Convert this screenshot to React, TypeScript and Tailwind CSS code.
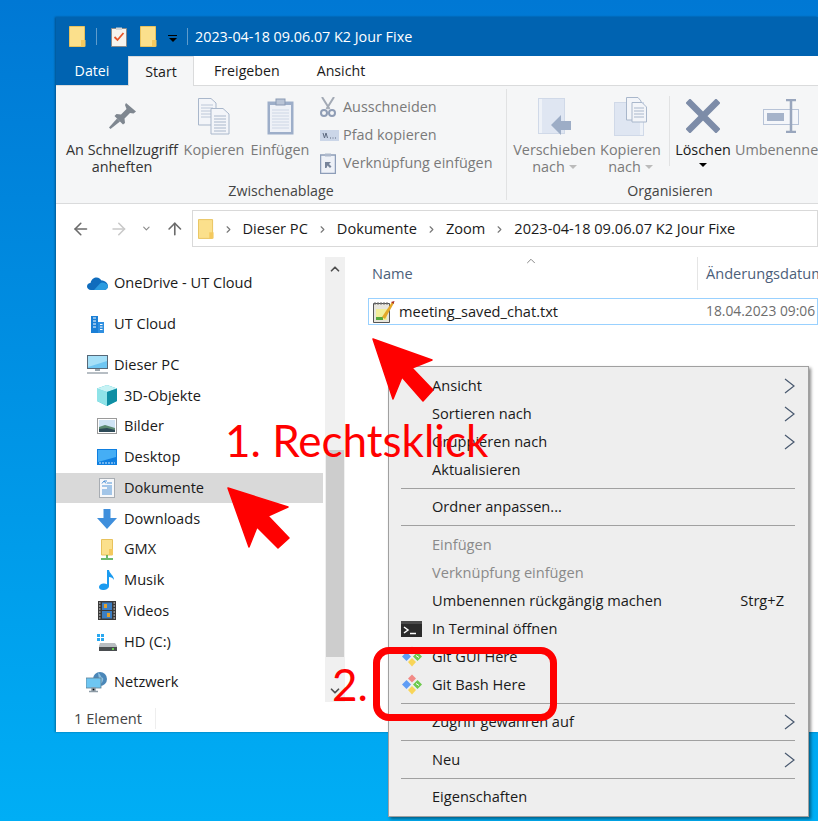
import React from 'react';
import { ChevronRight, ChevronUp, ChevronDown, ArrowLeft, ArrowRight, ArrowUp } from 'lucide-react';

const Folder: React.FC<{ w?: number; h?: number }> = ({ w = 17, h = 21 }) => (
  <svg width={w} height={h} viewBox="0 0 17 21">
    <path d="M0.5 0.5H15.5V20.5H0.5Z" fill="#fbe08c" stroke="#e8c25c" />
    <path d="M12 14H16.5V20.5H12Z" fill="#f4c95e" />
  </svg>
);

const DocCheck = () => (
  <svg width="16" height="20" viewBox="0 0 16 20">
    <path d="M0.5 1.5H15.5V19.5H0.5Z" fill="#f7f4ee" stroke="#8a8a8a" />
    <path d="M5 0.5H11V3H5Z" fill="#d8d8d8" />
    <path d="M3.5 10L6.5 13L12.5 6" fill="none" stroke="#e8562a" strokeWidth="1.8" />
  </svg>
);

const PinIcon = () => (
  <svg width="27" height="26" viewBox="0 0 27 26">
    <path d="M17 0L27 8.500L24.500 10.500L21 10L15.500 15.500L16 20L14 21.500L5.500 13L7.500 11L12 11.500L17.500 6L16 2Z" fill="#7f8790" />
    <path d="M8 15.500L0 24.500L1.500 26L11 18.500Z" fill="#7f8790" />
  </svg>
);

const CopyIcon = () => (
  <svg width="32" height="37" viewBox="0 0 32 37">
    <path d="M0.5 0.5H13L18 5V27H0.5Z" fill="#f3f5f9" stroke="#a9b7cb" />
    <path d="M3 7H15M3 10H15M3 13H15M3 16H15M3 19H15" stroke="#bcc7d8" />
    <path d="M13 10.5H25L31 16V36H13Z" fill="#f3f5f9" stroke="#a9b7cb" />
    <path d="M16 18H28M16 21H28M16 24H28M16 27H28M16 30H28M16 33H28" stroke="#a9b7cb" />
  </svg>
);

const PasteIcon = () => (
  <svg width="27" height="37" viewBox="0 0 27 37">
    <rect x="0.5" y="3.5" width="26" height="33" fill="#9daec9" />
    <rect x="3" y="7" width="21" height="27" fill="#eef1f7" />
    <path d="M5 12H22M5 15H22M5 18H22M5 21H22M5 24H22M5 27H22M5 30H22" stroke="#cdd6e5" />
    <rect x="9" y="1" width="9" height="6" fill="#b9c4d6" stroke="#8a99b3" />
  </svg>
);

const ScissorsIcon = () => (
  <svg width="16" height="20" viewBox="0 0 16 20">
    <path d="M2 0L9.5 12M14 0L6.5 12" stroke="#a3aab5" strokeWidth="2" fill="none" />
    <circle cx="4" cy="16" r="3" fill="none" stroke="#8f9db5" strokeWidth="2" />
    <circle cx="12" cy="16" r="3" fill="none" stroke="#8f9db5" strokeWidth="2" />
  </svg>
);

const PathIcon = () => (
  <svg width="19" height="11" viewBox="0 0 19 11">
    <rect width="19" height="11" fill="#cbd6e8" />
    <path d="M3 3L4.5 8L6 3L7.5 8M10 8H11M12.5 8H13.5M15 8H16" stroke="#5d6a80" fill="none" />
  </svg>
);

const ShortcutIcon = () => (
  <svg width="16" height="21" viewBox="0 0 16 21">
    <rect x="0.5" y="2" width="15" height="18.5" fill="#eef1f7" stroke="#8d9db8" strokeWidth="1.5" />
    <rect x="5" y="0.5" width="6" height="3" fill="#aeb9cc" />
    <path d="M5 15V9H11L9 11L11.5 13.5L10 15L7.5 12.5L6.5 15Z" fill="#77849a" />
  </svg>
);

const MoveIcon = () => (
  <svg width="34" height="37" viewBox="0 0 34 37">
    <rect x="0.5" y="0.5" width="26" height="35" fill="#dfe6f2" stroke="#d0d9e8" />
    <path d="M1 1H4V35H1Z" fill="#eef2f8" />
    <path d="M13 27L23 17V23H33V32H23V37Z" fill="#9dadc6" />
  </svg>
);

const CopyToIcon = () => (
  <svg width="33" height="39" viewBox="0 0 33 39">
    <rect x="0.5" y="5.5" width="29" height="33" fill="#dfe6f2" stroke="#d0d9e8" />
    <path d="M26 6H29V38H26Z" fill="#eef2f8" />
    <path d="M12.5 0.5H24L27 4V23H12.5Z" fill="#f3f5f9" stroke="#a9b7cb" />
    <path d="M18 5.5H28L32.5 10V25H18Z" fill="#f3f5f9" stroke="#a9b7cb" />
    <path d="M20 11H30M20 14H30M20 17H30M20 20H30" stroke="#a9b7cb" />
  </svg>
);

const DeleteIcon = () => (
  <svg width="34" height="34" viewBox="0 0 34 34">
    <path d="M4 4L30 30M30 4L4 30" stroke="#7d8ca8" strokeWidth="6.5" strokeLinecap="square" />
  </svg>
);

const RenameIcon = () => (
  <svg width="37" height="34" viewBox="0 0 37 34">
    <rect x="0.5" y="10.5" width="35" height="15" fill="#f4f6fa" stroke="#b7c3d7" />
    <rect x="4" y="14" width="17" height="8" fill="#a5b3ca" />
    <path d="M23 1H33M28 1V33M23 33H33" stroke="#99a6bd" strokeWidth="2.5" fill="none" />
  </svg>
);

const CloudIcon = () => (
  <svg width="21" height="14" viewBox="0 0 21 14">
    <path d="M4 14C1.5 14 0 12 0 10.500C0 8.500 1.500 7 3.500 7C4.500 3 7 1.500 9.500 1.500C12 1.500 13.500 3 14.500 4.500C18 4.500 21 7 21 10C21 12.500 19 14 17 14Z" fill="#0f6cbd" />
    <path d="M7 14L13 7.500C15 5.500 20 7 21 10C21 12.500 19 14 17 14Z" fill="#2a9be0" />
  </svg>
);

const BuildingIcon = () => (
  <svg width="13" height="17" viewBox="0 0 13 17">
    <path d="M0 0H7V17H0Z" fill="#1a7fd6" />
    <path d="M7 6H13V17H7Z" fill="#2f8fe0" />
    <path d="M2 2H5M2 5H5M2 8H5M2 11H5M9 8.500H11.500M9 11H11.500M9 13.500H11.500" stroke="#fff" />
  </svg>
);

const PcIcon = () => (
  <svg width="21" height="20" viewBox="0 0 21 20">
    <rect x="0.500" y="0.500" width="20" height="13" fill="#6ec6f2" stroke="#566878" />
    <path d="M1 1H20V6L1 12Z" fill="#a5e0f8" />
    <path d="M8 14H13V16H8Z" fill="#9ba6ad" />
    <path d="M0 17H21V19H0Z" fill="#b7bec4" />
  </svg>
);

const CubeIcon = () => (
  <svg width="20" height="21" viewBox="0 0 20 21">
    <path d="M10 0L20 3.500V16L10 21L0 16V3.500Z" fill="#35c0cf" />
    <path d="M0 3.500L10 7L10 21L0 16Z" fill="#8fe3e8" />
    <path d="M10 0L20 3.500L10 7L0 3.500Z" fill="#c6f2f4" />
    <path d="M10 7L20 3.500V16L10 21Z" fill="#0f8ea3" />
  </svg>
);

const PictureIcon = () => (
  <svg width="20" height="16" viewBox="0 0 20 16">
    <rect x="0.500" y="0.500" width="19" height="15" fill="#fff" stroke="#9a9a9a" />
    <rect x="2" y="2" width="16" height="12" fill="#cfe3f4" />
    <path d="M2 9L8 7L18 10V14H2Z" fill="#5c8a72" />
    <path d="M2 11L10 10L18 12V14H2Z" fill="#2d4a58" />
  </svg>
);

const DesktopIcon = () => (
  <svg width="20" height="16" viewBox="0 0 20 16">
    <rect width="20" height="16" fill="#0f7fe0" />
    <path d="M1 1H19V8L1 13Z" fill="#45aef5" />
    <path d="M2 14H18" stroke="#cfeaff" strokeDasharray="2 1" />
  </svg>
);

const DocumentIcon = () => (
  <svg width="16" height="20" viewBox="0 0 16 20">
    <rect x="0.500" y="0.500" width="15" height="19" fill="#f7f8fa" stroke="#a8adb3" />
    <path d="M5 3H8M8 5H13M3 8H13M8 10H13M3 12H13M3 14H13M3 16H13" stroke="#4f93d6" />
    <path d="M3 5.500L5 3L7 5.500" stroke="#4f93d6" fill="none" />
  </svg>
);

const DownloadIcon = () => (
  <svg width="20" height="20" viewBox="0 0 20 20">
    <path d="M6.500 0H13.500V9H20L10 20L0 9H6.500Z" fill="#3f8fdc" />
  </svg>
);

const NetFolderIcon = () => (
  <svg width="12" height="21" viewBox="0 0 12 21">
    <path d="M0.500 0.500H11.500V16H0.500Z" fill="#fbe08c" stroke="#e8c25c" />
    <path d="M8 10H12V16H8Z" fill="#f4c95e" />
    <path d="M6 16V19M0 20H12" stroke="#3fa33f" strokeWidth="1.500" />
  </svg>
);

const MusicIcon = () => (
  <svg width="16" height="20" viewBox="0 0 16 20">
    <path d="M8 0H10C10.500 4 15 5 15 10C14 8 12 7 10 7V16C10 18.500 7 20 4 20C1.500 20 0 18.800 0 17.200C0 15 2.500 13.500 5 13.500C6.200 13.500 7.200 13.800 8 14.300Z" fill="#1a9bf0" />
  </svg>
);

const VideoIcon = () => (
  <svg width="18" height="19" viewBox="0 0 18 19">
    <rect width="18" height="19" fill="#3a3a3a" />
    <path d="M1 2H2.500M1 5H2.500M1 8H2.500M1 11H2.500M1 14H2.500M1 17H2.500M15.500 2H17M15.500 5H17M15.500 8H17M15.500 11H17M15.500 14H17M15.500 17H17" stroke="#ddd" />
    <rect x="4" y="1.500" width="10" height="7.500" fill="#3c7fc4" />
    <rect x="4" y="10" width="10" height="7.500" fill="#3c7fc4" />
    <path d="M6 3H9V7H6ZM9 12H12V16H9Z" fill="#e0a030" />
  </svg>
);

const DriveIcon = () => (
  <svg width="20" height="18" viewBox="0 0 20 18">
    <path d="M0 1H3V4H0ZM4 1H7V4H4ZM0 5H3V8H0ZM4 5H7V8H4Z" fill="#29a8f0" />
    <path d="M3 10H18L20 13V18H2V13Z" fill="#b9bdc1" />
    <path d="M2 14H20V18H2Z" fill="#4a4d50" />
    <path d="M15 15H17V17H15Z" fill="#62d04f" />
  </svg>
);

const NetworkIcon = () => (
  <svg width="22" height="21" viewBox="0 0 22 21">
    <circle cx="14" cy="7" r="7" fill="#4b87b8" />
    <path d="M12 1C15 2 14 5 17 6C18 8 16 11 14 13" fill="#8dc0e0" />
    <rect x="0" y="6" width="15" height="10" fill="#6ec6f2" stroke="#5f7f95" strokeWidth="0.800" />
    <path d="M6 16H9V19H6ZM3 19.500H12" stroke="#8d9ba6" strokeWidth="1.500" />
  </svg>
);

const TxtIcon = () => (
  <svg width="22" height="22" viewBox="0 0 22 22" className="shrink-0">
    <path d="M0.500 2.500H16.500V21.500H0.500Z" fill="#e7e5dc" stroke="#555" />
    <path d="M3 8H14V19H3Z" fill="#f3ee9a" />
    <path d="M3 16H10V19H3Z" fill="#57a83e" />
    <path d="M2 1V4M5 1V4M8 1V4M11 1V4M14 1V4" stroke="#777" />
    <path d="M9 16L19 1L21 2L12 18Z" fill="#e4a829" />
    <path d="M18 1L21.500 0L20.500 3Z" fill="#a8281f" />
  </svg>
);

const TerminalIcon = () => (
  <svg width="21" height="16" viewBox="0 0 21 16">
    <rect width="21" height="16" fill="#2b2b2b" />
    <rect x="0" y="0" width="21" height="3" fill="#4b4b4b" />
    <path d="M3 6L7 9L3 12" stroke="#fff" strokeWidth="1.500" fill="none" />
    <path d="M9 12.500H15" stroke="#fff" strokeWidth="1.500" />
  </svg>
);

const GitIcon = () => (
  <svg width="22" height="21" viewBox="0 0 22 21">
    <path d="M11 0.500L15 4.500L11 8.500L7 4.500Z" fill="#f28a86" />
    <path d="M5.500 6L10 10.500L5.500 15L1 10.500Z" fill="#5f9df5" />
    <path d="M16.500 6L21 10.500L16.500 15L12 10.500Z" fill="#6fca4e" />
    <path d="M11 12L15 16L11 20.500L7 16Z" fill="#f8d558" />
    <path d="M15 9.500L18 11.500" stroke="#fff" />
  </svg>
);

const SubmenuArrow = () => (
  <svg width="11" height="16" viewBox="0 0 11 16">
    <path d="M1 1L10 8L1 15" fill="none" stroke="#4a5a70" strokeWidth="1.200" />
  </svg>
);

const navItems = [
  { label: 'OneDrive - UT Cloud', icon: <CloudIcon />, indent: 0, gap: 0 },
  { label: 'UT Cloud', icon: <BuildingIcon />, indent: 0, gap: 10 },
  { label: 'Dieser PC', icon: <PcIcon />, indent: 0, gap: 10 },
  { label: '3D-Objekte', icon: <CubeIcon />, indent: 1, gap: 0 },
  { label: 'Bilder', icon: <PictureIcon />, indent: 1, gap: 0 },
  { label: 'Desktop', icon: <DesktopIcon />, indent: 1, gap: 0 },
  { label: 'Dokumente', icon: <DocumentIcon />, indent: 1, gap: 0, selected: true },
  { label: 'Downloads', icon: <DownloadIcon />, indent: 1, gap: 0 },
  { label: 'GMX', icon: <NetFolderIcon />, indent: 1, gap: 0 },
  { label: 'Musik', icon: <MusicIcon />, indent: 1, gap: 0 },
  { label: 'Videos', icon: <VideoIcon />, indent: 1, gap: 0 },
  { label: 'HD (C:)', icon: <DriveIcon />, indent: 1, gap: 0 },
  { label: 'Netzwerk', icon: <NetworkIcon />, indent: 0, gap: 10 },
];

const RibbonButton: React.FC<{
  icon: React.ReactNode;
  lines: string[];
  width: string;
  disabled?: boolean;
  arrow?: boolean;
}> = ({ icon, lines, width, disabled, arrow }) => (
  <div className={`${width} flex flex-col items-center text-[14.400px] leading-[17px] ${disabled ? 'text-[#7a7a7a]' : 'text-[#333]'}`}>
    <div className="h-[50px] flex items-center justify-center">{icon}</div>
    {lines.map((line, i) => (
      <div key={line} className="whitespace-nowrap flex items-center gap-1">
        {line}
        {arrow && i === lines.length - 1 && <span className="w-0 h-0 border-x-[4px] border-x-transparent border-t-[4px] border-t-[#bbb]" />}
      </div>
    ))}
  </div>
);

const SmallCommand: React.FC<{ icon: React.ReactNode; label: string }> = ({ icon, label }) => (
  <div className="h-[28px] flex items-center text-[14.400px] text-[#7a7a7a] whitespace-nowrap">
    <div className="w-[23px] flex justify-start">{icon}</div>
    {label}
  </div>
);

type MenuRow =
  | { sep: true }
  | { sep?: false; label: string; disabled?: boolean; more?: boolean; icon?: React.ReactNode; shortcut?: string };

const menuRows: MenuRow[] = [
  { label: 'Ansicht', more: true },
  { label: 'Sortieren nach', more: true },
  { label: 'Gruppieren nach', more: true },
  { label: 'Aktualisieren' },
  { sep: true },
  { label: 'Ordner anpassen...' },
  { sep: true },
  { label: 'Einfügen', disabled: true },
  { label: 'Verknüpfung einfügen', disabled: true },
  { label: 'Umbenennen rückgängig machen', shortcut: 'Strg+Z' },
  { label: 'In Terminal öffnen', icon: <TerminalIcon /> },
  { label: 'Git GUI Here', icon: <GitIcon /> },
  { label: 'Git Bash Here', icon: <GitIcon /> },
  { sep: true },
  { label: 'Zugriff gewähren auf', more: true },
  { sep: true },
  { label: 'Neu', more: true },
  { sep: true },
  { label: 'Eigenschaften' },
];

const Crumb: React.FC<{ label: string }> = ({ label }) => (
  <>
    <ChevronRight size={11} strokeWidth={2.5} className="text-[#777] mx-[7px]" />
    <span className="mx-[2px]">{label}</span>
  </>
);

export default function App() {
  return (
    <div className="relative w-[818px] h-[821px] overflow-hidden pt-[17px] pl-[56px] bg-gradient-to-b from-[#0078d4] to-[#00aef5] font-['Open_Sans',sans-serif] text-[14.600px] text-[#1a1a1a]">
      <div className="w-[762px] h-[715px] flex flex-col overflow-hidden bg-white shadow-[-1px_0_2px_rgba(0,0,0,0.35)]">
        {/* title bar */}
        <div className="h-[39px] shrink-0 bg-[#0063b1] flex items-center pl-[13px] text-white">
          <Folder />
          <div className="w-px h-[17px] bg-[#5f9ccc] ml-[10px] mr-[14px]" />
          <DocCheck />
          <div className="w-[13px]" />
          <Folder />
          <div className="ml-[11px] w-[9px] flex flex-col items-center gap-[2px] mt-[3px]">
            <div className="w-[9px] h-px bg-black" />
            <div className="w-0 h-0 border-x-[4px] border-x-transparent border-t-[4px] border-t-black" />
          </div>
          <div className="w-px h-[17px] bg-[#5f9ccc] ml-[10px] mr-[7px]" />
          <span className="text-[14.350px] whitespace-nowrap">2023-04-18 09.06.07 K2 Jour Fixe</span>
        </div>

        {/* tabs */}
        <div className="h-[30px] shrink-0 flex items-stretch bg-white border-b border-[#dadbdc] text-[14.200px]">
          <div className="w-[72px] bg-[#0063b1] text-white flex items-center justify-center">Datei</div>
          <div className="w-[66px] h-[30px] bg-[#f5f6f7] border-x border-t border-[#dadbdc] flex items-center justify-center">Start</div>
          <div className="pl-[20px] flex items-center">Freigeben</div>
          <div className="pl-[37px] flex items-center">Ansicht</div>
        </div>

        {/* ribbon */}
        <div className="h-[118px] shrink-0 flex bg-[#f5f6f7] border-b border-[#dadbdc]">
          <div className="w-[451px] shrink-0 flex flex-col border-r border-[#e1e2e3] my-[3px]">
            <div className="h-[94px] flex pl-[10px] pt-[2px]">
              <RibbonButton icon={<PinIcon />} lines={['An Schnellzugriff', 'anheften']} width="w-[112px]" />
              <RibbonButton icon={<CopyIcon />} lines={['Kopieren']} width="w-[72px]" disabled />
              <RibbonButton icon={<PasteIcon />} lines={['Einfügen']} width="w-[60px]" disabled />
              <div className="pl-[10px] pt-[2px] flex flex-col">
                <SmallCommand icon={<ScissorsIcon />} label="Ausschneiden" />
                <SmallCommand icon={<PathIcon />} label="Pfad kopieren" />
                <SmallCommand icon={<ShortcutIcon />} label="Verknüpfung einfügen" />
              </div>
            </div>
            <div className="text-center text-[14.200px] text-[#444] leading-[18px]">Zwischenablage</div>
          </div>
          <div className="w-[326px] shrink-0 flex flex-col my-[3px]">
            <div className="h-[94px] flex pt-[2px]">
              <RibbonButton icon={<MoveIcon />} lines={['Verschieben', 'nach']} width="w-[95px]" disabled arrow />
              <RibbonButton icon={<CopyToIcon />} lines={['Kopieren', 'nach']} width="w-[57px]" disabled arrow />
              <div className="w-px h-[70px] bg-[#e1e2e3] mt-[5px] ml-[10px]" />
              <div className="w-[66px] flex flex-col items-center text-[14.400px] leading-[17px] text-[#1a1a1a]">
                <div className="h-[50px] flex items-center justify-center"><DeleteIcon /></div>
                Löschen
                <div className="mt-[5px] w-0 h-0 border-x-[4px] border-x-transparent border-t-[4px] border-t-black" />
              </div>
              <RibbonButton icon={<RenameIcon />} lines={['Umbenennen']} width="w-[90px]" disabled />
            </div>
            <div className="text-center text-[14.200px] text-[#444] leading-[18px]">Organisieren</div>
          </div>
        </div>

        {/* address bar */}
        <div className="h-[45px] shrink-0 flex items-center bg-white pl-[15px] pt-[6px] pb-[2px]">
          <ArrowLeft size={20} strokeWidth={2} className="text-[#6b6b6b]" />
          <ArrowRight size={20} strokeWidth={2} className="text-[#c9c9c9] ml-[18px]" />
          <ChevronDown size={11} strokeWidth={2.500} className="text-[#8a8a8a] ml-[13px]" />
          <ArrowUp size={20} strokeWidth={2} className="text-[#6b6b6b] ml-[13px]" />
          <div className="ml-[7px] h-[37px] w-[640px] border border-[#d9d9d9] flex items-center pl-[5px] pt-[1px] whitespace-nowrap">
            <Folder w={16} h={20} />
            <div className="w-[2px]" />
            <Crumb label="Dieser PC" />
            <Crumb label="Dokumente" />
            <Crumb label="Zoom" />
            <Crumb label="2023-04-18 09.06.07 K2 Jour Fixe" />
          </div>
        </div>

        {/* body */}
        <div className="flex-1 flex min-h-0">
          <div className="w-[267px] shrink-0 pt-[19px]">
            {navItems.map(item => (
              <div
                key={item.label}
                style={{ marginTop: item.gap }}
                className={`h-[30.750px] flex items-center whitespace-nowrap ${item.selected ? 'bg-[#d9d9d9]' : ''}`}
              >
                <div className={`${item.indent ? 'w-[68px] pl-[34px]' : 'w-[58px] pl-[24px]'} flex justify-center shrink-0`}>{item.icon}</div>
                <span>{item.label}</span>
              </div>
            ))}
          </div>
          <div className="w-[20px] shrink-0 ml-[2px] mt-[8px] mb-[3px] bg-[#f0f0f0] flex flex-col items-center justify-between">
            <ChevronUp size={14} strokeWidth={3} className="text-[#505050] mt-[5px]" />
            <div className="flex-1 w-[18px] mt-[5px] flex flex-col justify-end">
              <div className="h-[207px] bg-[#cdcdcd]" />
            </div>
            <div className="h-[45px] flex items-end pb-[4px]">
              <ChevronDown size={14} strokeWidth={3} className="text-[#505050]" />
            </div>
          </div>
          <div className="flex-1 min-w-0 pl-[23px] pt-[9px] whitespace-nowrap overflow-hidden">
            <div className="relative h-[32px] flex items-center text-[#4c607a]">
              <span className="pl-[4px]">Name</span>
              <ChevronUp size={14} strokeWidth={1.500} className="absolute left-[156px] -top-[4px] text-[#777]" />
              <div className="absolute left-[329px] -top-px bottom-0 w-px bg-[#e5e5e5]" />
              <span className="absolute left-[338px]">Änderungsdatum</span>
            </div>
            <div className="h-[27px] mt-[8px] border border-[#99d1ff] flex items-center pl-[4px]">
              <TxtIcon />
              <span className="ml-[4px] w-[307px] shrink-0">meeting_saved_chat.txt</span>
              <span className="text-[#6d6d6d] text-[13.800px] shrink-0">18.04.2023 09:06</span>
            </div>
          </div>
        </div>

        {/* status bar */}
        <div className="h-[27px] shrink-0 flex items-center pl-[18px] text-[#444]">
          <span className="pr-[13px] border-r border-[#eeeeee]">1 Element</span>
        </div>
      </div>

      {/* context menu */}
      <div className="absolute left-[388px] top-[366px] w-[421px] h-[451px] bg-[#eeeeee] border border-[#a0a0a0] shadow-[2px_2px_3px_rgba(0,0,0,0.45)] pt-[4.500px] pl-[12px] pr-[13px] text-[#1a1a1a]">
        {menuRows.map((row, i) =>
          row.sep ? (
            <div key={i} className="h-[9.500px] flex items-center">
              <div className="w-full h-px bg-[#a0a0a0]" />
            </div>
          ) : (
            <div key={row.label} className={`h-[28px] flex items-center whitespace-nowrap ${row.disabled ? 'text-[#8a8a8a]' : ''}`}>
              <div className="w-[31px] shrink-0">{row.icon}</div>
              <span className="flex-1">{row.label}</span>
              {row.shortcut && <span className="mr-[11px]">{row.shortcut}</span>}
              {row.more && <SubmenuArrow />}
            </div>
          )
        )}
      </div>

      {/* annotations */}
      <svg className="absolute inset-0" width="818" height="821" viewBox="0 0 818 821">
        <path d="M373 339L432 360L412 368L433 390L423 401L402 377L393 399Z" fill="#ff0000" stroke="#ff0000" strokeWidth="1.500" strokeLinejoin="round" />
        <path d="M228 488L288 507L268 516L289 538L278 548L257 527L249 547Z" fill="#ff0000" stroke="#ff0000" strokeWidth="1.500" strokeLinejoin="round" />
      </svg>
      <div className="absolute left-[225px] top-[413px] font-['Lato',sans-serif] text-[44px] leading-[54px] text-[#ff0000] whitespace-nowrap">1. Rechtsklick</div>
      <div className="absolute left-[332px] top-[657px] font-['Lato',sans-serif] text-[44px] leading-[54px] text-[#ff0000] whitespace-nowrap">2.</div>
      <div className="absolute left-[373px] top-[647px] w-[184px] h-[74px] border-[7px] border-[#ff0000] rounded-[16px]" />
    </div>
  );
}
